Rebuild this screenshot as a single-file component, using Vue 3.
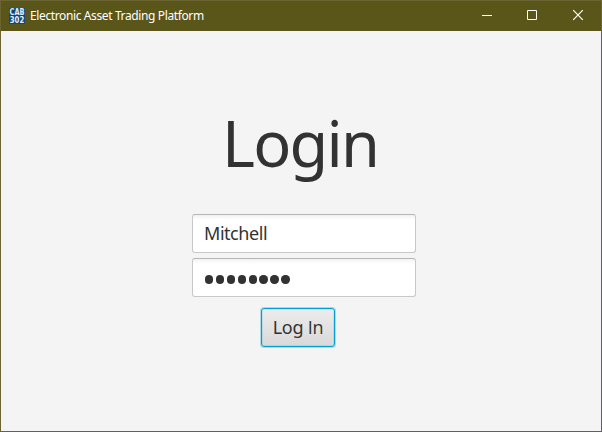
<script setup>
const username = 'Mitchell'
const passwordLength = 8
</script>

<template>
  <div class="window">
    <header class="titlebar">
      <svg class="logo" width="16" height="16" viewBox="0 0 16 16">
        <rect width="16" height="16" fill="#11477f" />
        <text x="0.6" y="7" textLength="14.8" lengthAdjust="spacingAndGlyphs">CAB</text>
        <text x="0.8" y="15" textLength="14.4" lengthAdjust="spacingAndGlyphs">302</text>
      </svg>
      <span class="title">Electronic Asset Trading Platform</span>
      <div class="controls">
        <svg width="46" height="29" viewBox="0 0 46 29"><path d="M18 14.5h10" /></svg>
        <svg width="45" height="29" viewBox="0 0 45 29"><path d="M17.5 9.5h9v9h-9z" /></svg>
        <svg width="46" height="29" viewBox="0 0 46 29"><path class="close" d="M18.2 9.2l9.6 9.6M27.8 9.2l-9.6 9.6" /></svg>
      </div>
    </header>
    <main class="content">
      <h1 class="heading">Login</h1>
      <div class="field"><span class="name">{{ username }}</span></div>
      <div class="field password">
        <span v-for="n in passwordLength" :key="n" class="dot"></span>
      </div>
      <button class="submit"><span class="label">Log <span class="plain">In</span></span></button>
    </main>
  </div>
</template>

<style>
body {
  margin: 0;
  overflow: hidden;
}
</style>

<style scoped>
.window {
  box-sizing: border-box;
  width: 602px;
  height: 432px;
  border: 1px solid #6b6332;
  background: #f4f4f4;
  font-family: "Noto Sans", "Open Sans", sans-serif;
  color: #323232;
}
.titlebar {
  display: flex;
  align-items: center;
  height: 30px;
  padding-left: 8px;
  background: #5a561a;
}
.logo {
  flex: none;
  overflow: visible;
  margin-top: -1px;
}
.logo text {
  font: 700 8px "DejaVu Sans", sans-serif;
  fill: #e6edf3;
}
.title {
  margin-left: 5px;
  font-size: 12px;
  letter-spacing: -0.38px;
  line-height: 30px;
  color: #fff;
  white-space: nowrap;
}
.controls {
  display: flex;
  margin: -1px 0 0 auto;
}
.controls path {
  fill: none;
  stroke: #fff;
  stroke-width: 1;
}
.controls .close {
  stroke-width: 1.2;
}
.content {
  display: flex;
  flex-direction: column;
  align-items: center;
  padding: 66px 0 0 6px;
}
.heading {
  margin: 0 0 26px;
  padding-right: 8px;
  font-size: 63px;
  font-weight: 400;
  line-height: 91px;
  letter-spacing: -1.8px;
}
.field {
  box-sizing: border-box;
  display: flex;
  align-items: center;
  width: 224px;
  height: 39px;
  margin-bottom: 5px;
  padding-left: 11px;
  border: 1px solid #c8c8c8;
  border-top-color: #b5b5b5;
  border-radius: 3px;
  background: linear-gradient(#f2f2f2, #fff 5px);
  font-size: 18px;
}
.name {
  padding-bottom: 1px;
  letter-spacing: -0.45px;
}
.password {
  gap: 2.6px;
  padding: 4px 0 0 12px;
}
.dot {
  width: 8.3px;
  height: 8.3px;
  border-radius: 50%;
  background: #323232;
}
.submit {
  box-sizing: border-box;
  width: 74px;
  height: 39px;
  margin: 6px 12px 0 0;
  padding: 0 0 1px;
  border: 1px solid #039ed3;
  border-radius: 3px;
  background: linear-gradient(#ececec, #d9d9d9);
  box-shadow: 0 0 0 1px rgba(3, 158, 211, 0.3), inset 0 0 0 1px rgba(3, 158, 211, 0.15);
  font-family: inherit;
  font-size: 18px;
  color: #323232;
}
.label {
  letter-spacing: -0.25px;
}
.plain {
  font-family: "Open Sans", sans-serif;
}
</style>
